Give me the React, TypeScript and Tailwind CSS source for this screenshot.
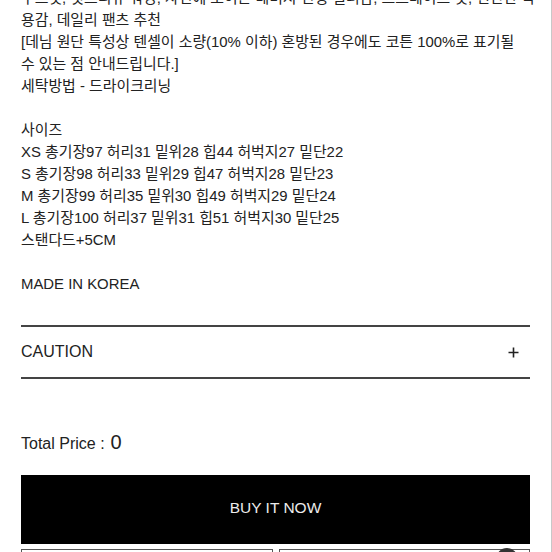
import React from "react";

const lines: string[] = [
  "루즈핏, 컷트리뷰 워싱, 자연에 보이는 데미지 진청 컬러감, 스트레이트 핏, 편안한 착",
  "용감, 데일리 팬츠 추천",
  "[데님 원단 특성상 텐셀이 소량(10% 이하) 혼방된 경우에도 코튼 100%로 표기될",
  "수 있는 점 안내드립니다.]",
  "세탁방법 - 드라이크리닝",
  "",
  "사이즈",
  "XS 총기장97 허리31 밑위28 힙44 허벅지27 밑단22",
  "S 총기장98 허리33 밑위29 힙47 허벅지28 밑단23",
  "M 총기장99 허리35 밑위30 힙49 허벅지29 밑단24",
  "L 총기장100 허리37 밑위31 힙51 허벅지30 밑단25",
  "스탠다드+5CM",
  "",
  "MADE IN KOREA",
];

export default function App() {
  return (
    <div
      className="w-[552px] h-[552px] overflow-hidden bg-white border-r border-[#c8c8c8] text-[#222]"
      style={{ fontFamily: '"Liberation Sans", "Noto Sans CJK KR", Arial, sans-serif' }}
    >
      <div className="pl-[21px] pr-[21px] w-[551px]">
        <div className="-mt-[13px] text-[14.9px] leading-[22px]">
          {lines.map((l, i) => (
            <div key={i} className="whitespace-nowrap h-[22px]">
              {l}
            </div>
          ))}
        </div>
        <div className="mt-[30px] h-[2px] bg-[#444]" />
        <div className="flex items-center justify-between h-[50px]">
          <span className="text-[16px]">CAUTION</span>
          <svg width="11" height="11" viewBox="0 0 11 11" className="mr-[11px]">
            <path d="M5.5 0.5V10.5M0.5 5.5H10.5" stroke="#222" strokeWidth="1.6" />
          </svg>
        </div>
        <div className="h-[2px] bg-[#444]" />
        <div className="mt-[48px] flex items-baseline h-[28px]">
          <span className="text-[16px]">Total Price :</span>
          <span className="text-[20px] ml-[6px]">0</span>
        </div>
        <div className="mt-[20px] h-[69px] bg-black flex items-center justify-center pb-[4px]">
          <span className="text-[15.5px] text-[#ececec]">BUY IT NOW</span>
        </div>
        <div className="mt-[5px] flex gap-[6px]">
          <div className="flex-1 h-[40px] border border-[#555]" />
          <div className="flex-1 h-[40px] border border-[#555] relative">
            <div className="absolute left-[216px] top-[-2px] w-[22px] h-[22px] rounded-full bg-[#333]" />
          </div>
        </div>
      </div>
    </div>
  );
}
